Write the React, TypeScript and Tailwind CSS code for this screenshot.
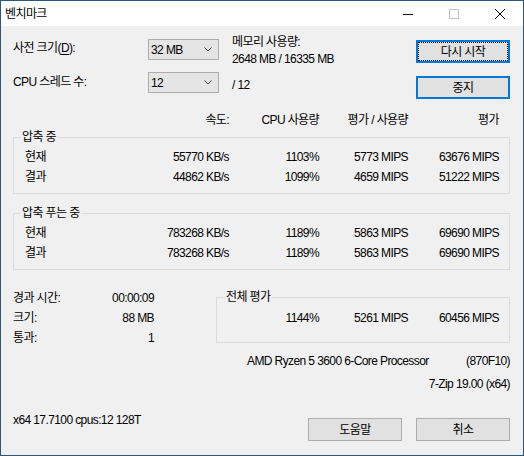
import type { ReactNode } from "react";

const FONT = "font-['Liberation_Sans','Noto_Sans_CJK_KR',sans-serif]";

interface Row {
  label: string;
  speed: string;
  cpu: string;
  rating: string;
  total: string;
}

const COMPRESS: Row[] = [
  { label: "현재", speed: "55770 KB/s", cpu: "1103%", rating: "5773 MIPS", total: "63676 MIPS" },
  { label: "결과", speed: "44862 KB/s", cpu: "1099%", rating: "4659 MIPS", total: "51222 MIPS" },
];

const DECOMPRESS: Row[] = [
  { label: "현재", speed: "783268 KB/s", cpu: "1189%", rating: "5863 MIPS", total: "69690 MIPS" },
  { label: "결과", speed: "783268 KB/s", cpu: "1189%", rating: "5863 MIPS", total: "69690 MIPS" },
];

const STATS = [
  { label: "경과 시간:", value: "00:00:09" },
  { label: "크기:", value: "88 MB" },
  { label: "통과:", value: "1" },
];

function Combo({ value }: { value: string }) {
  return (
    <div className="flex h-[21px] w-[71px] items-center justify-between border border-[#adadad] bg-[#e5e5e5] pl-[2px] pr-[6px]">
      <span>{value}</span>
      <svg width="8" height="5" viewBox="0 0 8 5">
        <path d="M0.5 0.5 L4 4 L7.5 0.5" stroke="#444" strokeWidth="1" fill="none" />
      </svg>
    </div>
  );
}

function Btn({
  children,
  primary,
  focused,
  className = "",
}: {
  children: ReactNode;
  primary?: boolean;
  focused?: boolean;
  className?: string;
}) {
  return (
    <div
      className={`flex h-[23px] w-[94px] items-center justify-center bg-[#e1e1e1] ${
        primary ? "border-2 border-[#0078d7]" : "border border-[#adadad]"
      } ${focused ? "outline-1 outline-dotted outline-black outline-offset-[-3px]" : ""} ${className}`}
    >
      {children}
    </div>
  );
}

function DataRow({ row }: { row: Row }) {
  return (
    <div className="flex h-[20px] items-center">
      <div className="w-[95px]">{row.label}</div>
      <div className="w-[109px] text-right">{row.speed}</div>
      <div className="w-[90px] text-right">{row.cpu}</div>
      <div className="w-[89px] text-right">{row.rating}</div>
      <div className="w-[91px] text-right">{row.total}</div>
    </div>
  );
}

function Group({ title, rows, className = "" }: { title: string; rows: Row[]; className?: string }) {
  return (
    <fieldset className={`border border-[#dcdcdc] pb-[6px] pl-[11px] pr-[10px] pt-[2px] ${className}`}>
      <legend className="-ml-[4px] px-[1px] leading-[16px]">{title}</legend>
      {rows.map((r) => (
        <DataRow key={r.label} row={r} />
      ))}
    </fieldset>
  );
}

export default function App() {
  return (
    <div
      className={`flex h-[456px] w-[524px] flex-col border border-[#2b5876] bg-[#f0f0f0] text-[12px] tracking-[-0.6px] text-black ${FONT}`}
    >
      {/* title bar */}
      <div className="flex h-[25px] items-center bg-white">
        <span className="flex-1 pl-[4px]">벤치마크</span>
        <div className="flex h-full w-[46px] items-center justify-center">
          <svg width="10" height="10" viewBox="0 0 10 10">
            <path d="M0 5.5 H10" stroke="#000" strokeWidth="1" />
          </svg>
        </div>
        <div className="flex h-full w-[46px] items-center justify-center">
          <svg width="10" height="10" viewBox="0 0 10 10">
            <rect x="0.5" y="0.5" width="9" height="9" stroke="#c4c4c4" fill="none" />
          </svg>
        </div>
        <div className="flex h-full w-[46px] items-center justify-center">
          <svg width="10" height="10" viewBox="0 0 10 10">
            <path d="M0 0 L10 10 M10 0 L0 10" stroke="#000" strokeWidth="1" />
          </svg>
        </div>
      </div>

      <div className="flex flex-1 flex-col pl-[12px] pr-[13px] pt-[13px]">
        {/* settings */}
        <div className="flex h-[33px] items-start">
          <div className="-mt-[2px] flex h-[21px] w-[135px] items-center">
            사전 크기(<span className="underline underline-offset-2">D</span>):
          </div>
          <Combo value="32 MB" />
          <div className="-mt-[5px] ml-[13px] flex-1 leading-[17px]">
            <div>메모리 사용량:</div>
            <div>2648 MB / 16335 MB</div>
          </div>
          <Btn primary focused className="mt-[1px]">
            다시 시작
          </Btn>
        </div>
        <div className="flex h-[27px] items-start">
          <div className="-mt-[1px] flex h-[21px] w-[135px] items-center">CPU 스레드 수:</div>
          <Combo value="12" />
          <div className="ml-[13px] mt-[2px] flex h-[21px] flex-1 items-center">/ 12</div>
          <Btn primary className="mt-[4px]">
            중지
          </Btn>
        </div>

        {/* column headers */}
        <div className="mt-[13px] flex h-[16px] items-center pl-[12px]">
          <div className="w-[95px]" />
          <div className="w-[109px] text-right">속도:</div>
          <div className="w-[90px] text-right">CPU 사용량</div>
          <div className="w-[89px] text-right">평가 / 사용량</div>
          <div className="w-[91px] text-right">평가</div>
        </div>

        <Group title="압축 중" rows={COMPRESS} className="mt-[1px]" />
        <Group title="압축 푸는 중" rows={DECOMPRESS} className="mt-[11px]" />

        {/* summary */}
        <div className="mt-[18px] flex h-[60px] items-start justify-between">
          <div className="w-[141px]">
            {STATS.map((s) => (
              <div key={s.label} className="flex h-[20px] items-center justify-between">
                <span>{s.label}</span>
                <span>{s.value}</span>
              </div>
            ))}
          </div>
          <fieldset className="mt-[1px] w-[294px] border border-[#dcdcdc] pb-[14px] pl-[8px] pr-[10px] pt-[3px]">
            <legend className="px-[1px] leading-[16px]">전체 평가</legend>
            <div className="flex h-[20px] items-center justify-end">
              <div className="w-[90px] text-right">1144%</div>
              <div className="w-[89px] text-right">5261 MIPS</div>
              <div className="w-[91px] text-right">60456 MIPS</div>
            </div>
          </fieldset>
        </div>

        <div className="mt-[5px] flex h-[16px] w-[263px] items-center justify-between self-end">
          <span>AMD Ryzen 5 3600 6-Core Processor</span>
          <span>(870F10)</span>
        </div>
        <div className="mt-[7px] flex h-[16px] items-center justify-end">7-Zip 19.00 (x64)</div>

        {/* footer */}
        <div className="mt-[26px] flex h-[23px] items-start">
          <span className="-mt-[6px] flex-1 leading-[16px]">x64 17.7100 cpus:12 128T</span>
          <div className="flex gap-[14px]">
            <Btn>도움말</Btn>
            <Btn>취소</Btn>
          </div>
        </div>
      </div>
    </div>
  );
}
